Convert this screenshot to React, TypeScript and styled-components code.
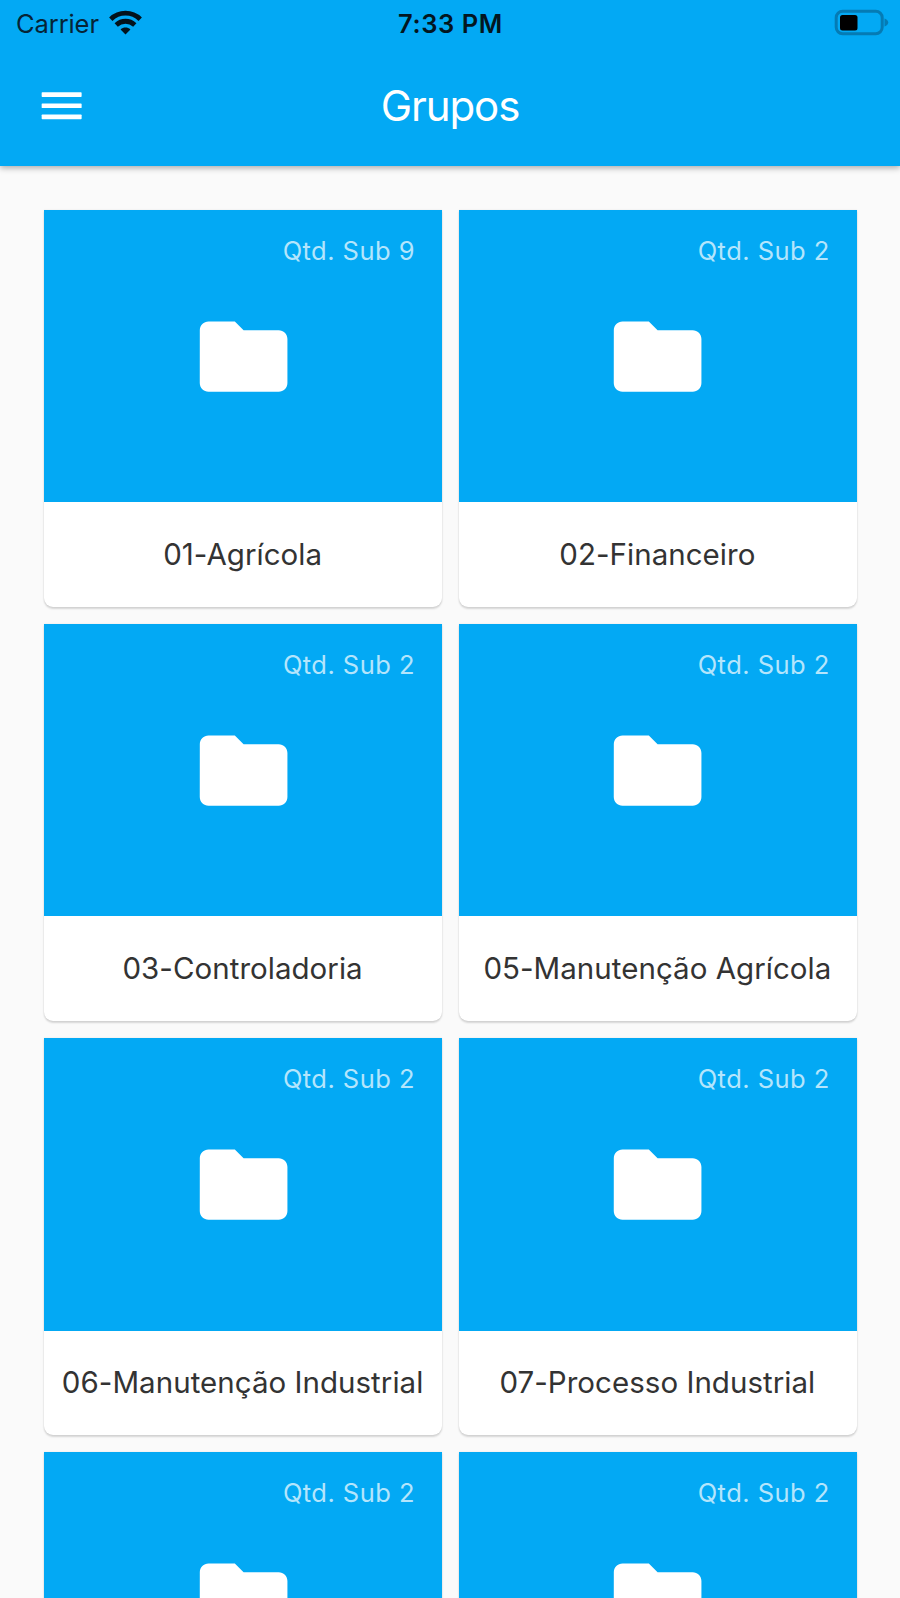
import React from "react";
import styled, { createGlobalStyle } from "styled-components";

const blue = "#03a9f4";

const GlobalStyle = createGlobalStyle`
  * { box-sizing: border-box; }
  body {
    margin: 0;
    background: #fafafa;
    font-family: Inter, "Liberation Sans", sans-serif;
    overflow: hidden;
  }
`;

const Screen = styled.div`
  width: 900px;
  height: 1598px;
  overflow: hidden;
  display: flex;
  flex-direction: column;
  background: #fafafa;
`;

const Header = styled.header`
  flex: none;
  height: 166px;
  background: ${blue};
  box-shadow: 0 2px 6px rgba(0, 0, 0, 0.32);
  z-index: 1;
`;

const StatusBar = styled.div`
  height: 44px;
  padding: 3px 16px 0;
  display: grid;
  grid-template-columns: 1fr auto 1fr;
  align-items: center;
  color: #062436;
`;

const CarrierGroup = styled.div`
  display: flex;
  align-items: center;
  gap: 10.5px;
`;

const Carrier = styled.span`
  font-size: 25.5px;
  letter-spacing: -0.1px;
  line-height: 40px;
`;

const Clock = styled.span`
  font-size: 25.5px;
  font-weight: 600;
  letter-spacing: 0.6px;
  line-height: 40px;
  padding-left: 1px;
  color: #03161f;
`;

const WifiIcon = styled.svg`
  width: 33px;
  height: 25px;
  margin-top: -3px;
`;

const BatteryIcon = styled.svg`
  width: 55px;
  height: 27px;
  justify-self: end;
  margin: -2px -5px 0 0;
`;

const Toolbar = styled.div`
  height: 122px;
  padding: 0 35.3px;
  display: grid;
  grid-template-columns: 1fr auto 1fr;
  align-items: center;
  color: #fff;
`;

const MenuIcon = styled.svg`
  width: 53.3px;
  height: 53.3px;
  margin-top: 1px;
`;

const Title = styled.h1`
  margin: 2px 0 0;
  font-size: 42px;
  font-weight: 400;
  line-height: 50px;
  letter-spacing: -1.1px;
`;

const Grid = styled.main`
  padding: 43.5px 43px 0 44.3px;
  display: grid;
  grid-template-columns: 397.6px 397.6px;
  column-gap: 17.2px;
  row-gap: 17.3px;
`;

const Card = styled.article`
  height: 397px;
  display: flex;
  flex-direction: column;
  background: #fff;
  border-radius: 0 0 9px 9px;
  box-shadow: 0 2px 2px rgba(0, 0, 0, 0.14), 0 0 2px rgba(0, 0, 0, 0.1);
`;

const Cover = styled.div`
  height: 292.6px;
  display: grid;
  grid-template-rows: 94px 105.2px 93.4px;
  justify-items: center;
  background: ${blue};
`;

const Count = styled.span`
  justify-self: end;
  padding: 25px 27px 0 0;
  font-size: 25.5px;
  line-height: 32px;
  letter-spacing: 0.45px;
  color: #b4e5fc;
`;

const FolderIcon = styled.svg`
  width: 105.2px;
  height: 105.2px;
`;

const Name = styled.div`
  height: 103.6px;
  display: flex;
  align-items: center;
  justify-content: center;
  white-space: nowrap;
  font-size: 29.5px;
  letter-spacing: 0.03px;
  padding-right: 1px;
  color: #333;
`;

const groups = [
  { name: "01-Agrícola", count: 9 },
  { name: "02-Financeiro", count: 2 },
  { name: "03-Controladoria", count: 2 },
  { name: "05-Manutenção Agrícola", count: 2 },
  { name: "06-Manutenção Industrial", count: 2 },
  { name: "07-Processo Industrial", count: 2 },
  { name: "", count: 2 },
  { name: "", count: 2 },
];

export default function App() {
  return (
    <Screen>
      <GlobalStyle />
      <Header>
        <StatusBar>
          <CarrierGroup>
            <Carrier>Carrier</Carrier>
            <WifiIcon viewBox="0 0 33 25" fill="none" stroke="#03131c" strokeWidth="4.8">
              <path d="M1.8 9.2C10 1.2 23 1.2 31.2 9.2" />
              <path d="M7.2 15C12.6 10 20.4 10 25.8 15" />
              <path d="M11.6 19.4C14.4 16.8 18.6 16.8 21.4 19.4L16.5 24.6Z" fill="#03131c" stroke="none" />
            </WifiIcon>
          </CarrierGroup>
          <Clock>7:33 PM</Clock>
          <BatteryIcon viewBox="0 0 55 27">
            <rect x="2.2" y="2.2" width="46" height="22.6" rx="6.5" fill="none" stroke="#057bb4" strokeWidth="3" />
            <rect x="6" y="6" width="17.5" height="15.5" rx="2.5" fill="#000" />
            <path d="M50.5 9.5C55.5 11.5 55.5 15.5 50.5 17.5Z" fill="#057bb4" />
          </BatteryIcon>
        </StatusBar>
        <Toolbar>
          <MenuIcon viewBox="0 0 24 24" fill="#fff">
            <rect x="3" y="6" width="18" height="2.1" rx="0.3" />
            <rect x="3" y="11" width="18" height="2.1" rx="0.3" />
            <rect x="3" y="16" width="18" height="2.1" rx="0.3" />
          </MenuIcon>
          <Title>Grupos</Title>
        </Toolbar>
      </Header>
      <Grid>
        {groups.map((group, index) => (
          <Card key={index}>
            <Cover>
              <Count>Qtd. Sub {group.count}</Count>
              <FolderIcon viewBox="0 0 24 24" fill="#fff">
                <path d="M10 4H4c-1.1 0-1.99.9-1.99 2L2 18c0 1.1.9 2 2 2h16c1.1 0 2-.9 2-2V8c0-1.1-.9-2-2-2h-8l-2-2z" />
              </FolderIcon>
            </Cover>
            <Name>{group.name}</Name>
          </Card>
        ))}
      </Grid>
    </Screen>
  );
}
